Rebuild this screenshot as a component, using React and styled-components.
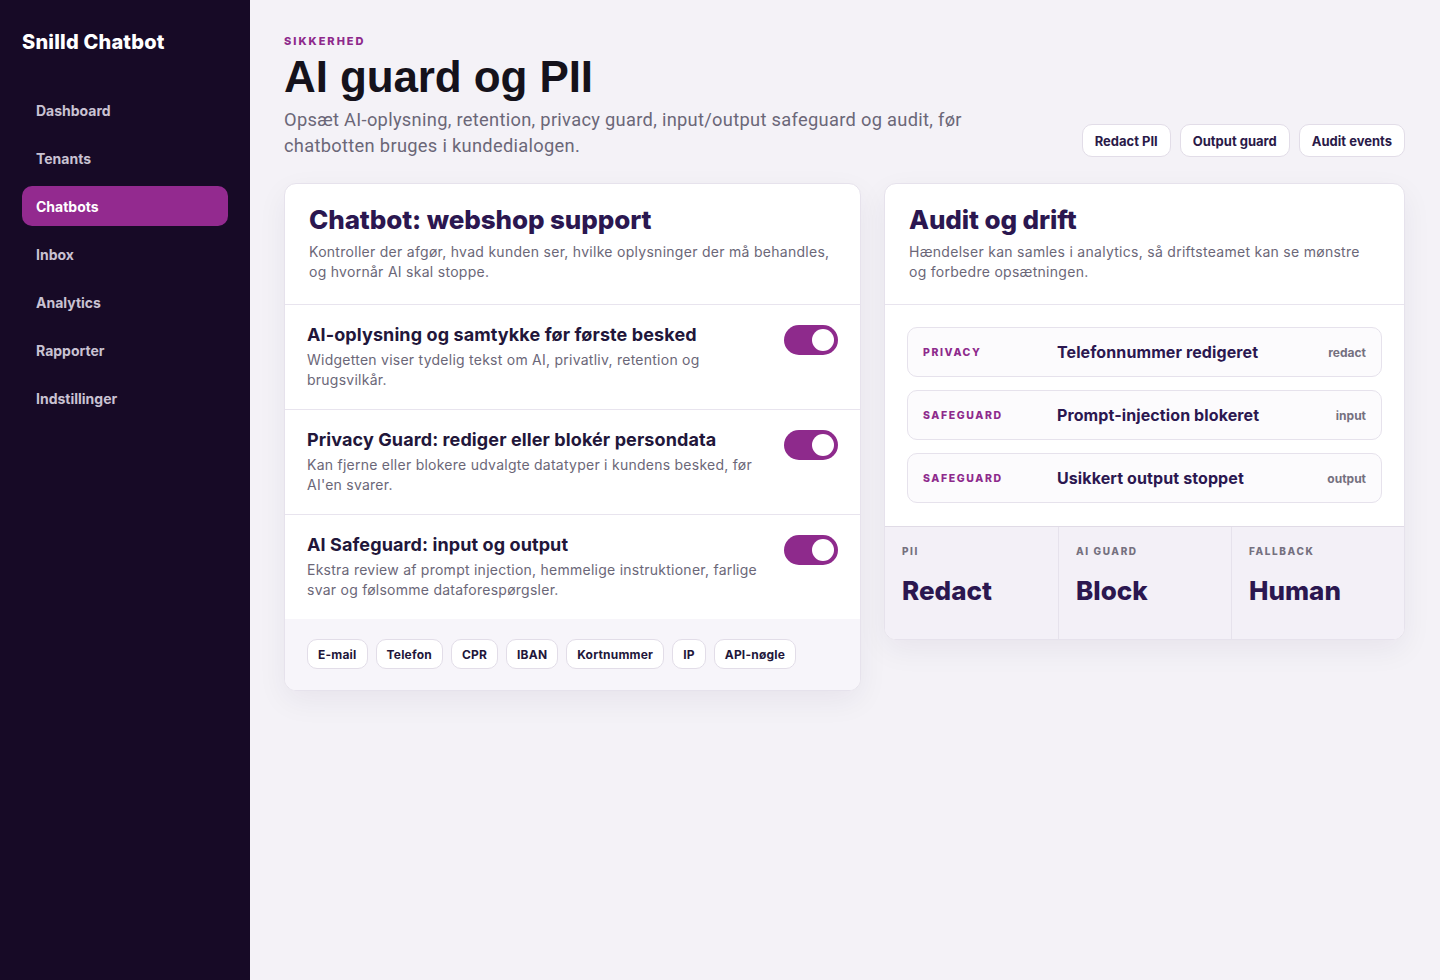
import React from "react";
import styled, { createGlobalStyle } from "styled-components";

const Global = createGlobalStyle`
  * { box-sizing: border-box; }
  html, body { margin: 0; padding: 0; }
  body { background: #f4f2f7; font-family: Inter, "Noto Sans", sans-serif; color: #22163a; }
`;

const Shell = styled.div`
  display: grid;
  grid-template-columns: 250px 1fr;
  min-height: 980px;
`;

const Sidebar = styled.aside`
  background: #170a26;
  padding: 30px 22px;
  display: flex;
  flex-direction: column;
`;

const Brand = styled.div`
  color: #fff;
  font-size: 20px;
  font-weight: 800;
  letter-spacing: 0.2px;
  margin-bottom: 36px;
`;

const Nav = styled.nav`
  display: flex;
  flex-direction: column;
  gap: 8px;
`;

const NavItem = styled.a`
  display: flex;
  align-items: center;
  height: 40px;
  padding: 0 14px;
  border-radius: 10px;
  font-size: 14px;
  font-weight: 700;
  color: ${(p) => (p.$active ? "#fff" : "#c9c2d2")};
  background: ${(p) => (p.$active ? "#932a8f" : "transparent")};
`;

const Main = styled.main`
  padding: 34px 35px 40px 34px;
`;

const Header = styled.header`
  display: flex;
  justify-content: space-between;
  align-items: flex-end;
  margin-bottom: 24px;
`;

const HeadText = styled.div`
  display: flex;
  flex-direction: column;
`;

const Eyebrow = styled.div`
  font-size: 11px;
  font-weight: 800;
  letter-spacing: 2px;
  color: #8e2a8c;
  text-transform: uppercase;
`;

const Title = styled.h1`
  margin: 4px 0 5px;
  font-family: "Liberation Sans", Roboto, sans-serif;
  font-size: 44px;
  line-height: 50px;
  font-weight: 700;
  letter-spacing: -0.1px;
  color: #15121b;
`;

const Subtitle = styled.p`
  margin: 0;
  max-width: 700px;
  font-family: Roboto, "Liberation Sans", sans-serif;
  font-size: 18.3px;
  line-height: 26px;
  letter-spacing: 0.3px;
  color: #6b6778;
`;

const Actions = styled.div`
  display: flex;
  gap: 9px;
  margin-bottom: 2px;
`;

const Pill = styled.button`
  font-family: inherit;
  height: 33px;
  padding: 0 12px;
  background: #fff;
  border: 1px solid #e2dde8;
  border-radius: 10px;
  font-size: 13px;
  font-weight: 700;
  color: #2a1a48;
`;

const Grid = styled.div`
  display: grid;
  grid-template-columns: 577px 521px;
  gap: 23px;
  align-items: start;
`;

const Card = styled.section`
  background: #fff;
  border: 1px solid #e6e2ec;
  border-radius: 12px;
  overflow: hidden;
  box-shadow: 0 10px 30px rgba(40, 20, 70, 0.06);
`;

const CardHead = styled.div`
  padding: 20px 26px 22px 24px;
  border-bottom: 1px solid #e8e4ee;
`;

const CardTitle = styled.h2`
  margin: 0 0 6px;
  font-size: 26px;
  line-height: 32px;
  font-weight: 800;
  color: #2b1750;
  letter-spacing: -0.1px;
`;

const CardDesc = styled.p`
  margin: 0;
  font-size: 14px;
  line-height: 20px;
  color: #6b6778;
  letter-spacing: 0.28px;
`;

const Row = styled.div`
  display: flex;
  justify-content: space-between;
  gap: 24px;
  padding: 18px 22px 19px;
  border-bottom: ${(p) => (p.$last ? "none" : "1px solid #e8e4ee")};
`;

const RowText = styled.div`
  display: flex;
  flex-direction: column;
  gap: 3px;
  max-width: 462px;
`;

const RowTitle = styled.div`
  font-size: 18px;
  line-height: 24px;
  font-weight: 700;
  letter-spacing: 0.1px;
  color: #22163a;
`;

const RowDesc = styled.div`
  font-size: 14px;
  line-height: 20px;
  letter-spacing: 0.25px;
  color: #6b6778;
`;

const Toggle = styled.div`
  flex: none;
  width: 54px;
  height: 30px;
  margin-top: 2px;
  border-radius: 15px;
  background: #8e2a8c;
  display: flex;
  align-items: center;
  justify-content: flex-end;
  padding: 0 4px;
`;

const Knob = styled.div`
  width: 22px;
  height: 22px;
  border-radius: 50%;
  background: #fff;
`;

const ChipBar = styled.div`
  background: #f7f5fa;
  padding: 20px 22px 21px;
  display: flex;
  gap: 8px;
  flex-wrap: wrap;
`;

const Chip = styled.span`
  height: 30px;
  display: inline-flex;
  align-items: center;
  padding: 0 10px;
  background: #fff;
  border: 1px solid #e2dde8;
  border-radius: 10px;
  font-size: 12px;
  font-weight: 700;
  letter-spacing: 0.2px;
  color: #22163a;
`;

const Events = styled.div`
  padding: 22px 22px 23px;
  display: flex;
  flex-direction: column;
  gap: 13px;
`;

const Event = styled.div`
  height: 50px;
  display: grid;
  grid-template-columns: 134px 1fr auto;
  align-items: center;
  padding: 0 15px;
  border: 1px solid #e6e2ec;
  border-radius: 10px;
  background: #fcfbfd;
`;

const EventTag = styled.span`
  font-size: 10.5px;
  font-weight: 800;
  letter-spacing: 1.6px;
  color: #8e2a8c;
`;

const EventTitle = styled.span`
  font-size: 16px;
  font-weight: 700;
  letter-spacing: 0.1px;
  color: #2b1750;
`;

const EventKind = styled.span`
  font-size: 12px;
  font-weight: 700;
  color: #75707f;
`;

const Stats = styled.div`
  display: grid;
  grid-template-columns: repeat(3, 1fr);
  border-top: 1px solid #e0dbe6;
  background: #f3f0f7;
`;

const Stat = styled.div`
  padding: 18px 17px 30px;
  height: 112px;
  border-left: ${(p) => (p.$first ? "none" : "1px solid #e6e2ec")};
  display: flex;
  flex-direction: column;
  gap: 18px;
`;

const StatLabel = styled.span`
  font-size: 10px;
  font-weight: 800;
  letter-spacing: 1.6px;
  color: #75707f;
`;

const StatValue = styled.span`
  font-size: 26px;
  font-weight: 800;
  color: #2b1750;
`;

const navItems = ["Dashboard", "Tenants", "Chatbots", "Inbox", "Analytics", "Rapporter", "Indstillinger"];

const rows = [
  {
    t: "AI-oplysning og samtykke før første besked",
    d: "Widgetten viser tydelig tekst om AI, privatliv, retention og brugsvilkår.",
  },
  {
    t: "Privacy Guard: rediger eller blokér persondata",
    d: "Kan fjerne eller blokere udvalgte datatyper i kundens besked, før AI'en svarer.",
  },
  {
    t: "AI Safeguard: input og output",
    d: "Ekstra review af prompt injection, hemmelige instruktioner, farlige svar og følsomme dataforespørgsler.",
  },
];

const chips = ["E-mail", "Telefon", "CPR", "IBAN", "Kortnummer", "IP", "API-nøgle"];

const events = [
  ["PRIVACY", "Telefonnummer redigeret", "redact"],
  ["SAFEGUARD", "Prompt-injection blokeret", "input"],
  ["SAFEGUARD", "Usikkert output stoppet", "output"],
];

const stats = [
  ["PII", "Redact"],
  ["AI GUARD", "Block"],
  ["FALLBACK", "Human"],
];

export default function App() {
  return (
    <>
      <Global />
      <Shell>
        <Sidebar>
          <Brand>Snilld Chatbot</Brand>
          <Nav>
            {navItems.map((n) => (
              <NavItem key={n} $active={n === "Chatbots"}>{n}</NavItem>
            ))}
          </Nav>
        </Sidebar>
        <Main>
          <Header>
            <HeadText>
              <Eyebrow>Sikkerhed</Eyebrow>
              <Title>AI guard og PII</Title>
              <Subtitle>
                Opsæt AI-oplysning, retention, privacy guard, input/output safeguard og audit, før chatbotten bruges i kundedialogen.
              </Subtitle>
            </HeadText>
            <Actions>
              <Pill>Redact PII</Pill>
              <Pill>Output guard</Pill>
              <Pill>Audit events</Pill>
            </Actions>
          </Header>
          <Grid>
            <Card>
              <CardHead>
                <CardTitle>Chatbot: webshop support</CardTitle>
                <CardDesc>
                  Kontroller der afgør, hvad kunden ser, hvilke oplysninger der må behandles, og hvornår AI skal stoppe.
                </CardDesc>
              </CardHead>
              {rows.map((r, i) => (
                <Row key={r.t} $last={i === rows.length - 1}>
                  <RowText>
                    <RowTitle>{r.t}</RowTitle>
                    <RowDesc>{r.d}</RowDesc>
                  </RowText>
                  <Toggle><Knob /></Toggle>
                </Row>
              ))}
              <ChipBar>
                {chips.map((c) => (
                  <Chip key={c}>{c}</Chip>
                ))}
              </ChipBar>
            </Card>
            <Card>
              <CardHead>
                <CardTitle>Audit og drift</CardTitle>
                <CardDesc>
                  Hændelser kan samles i analytics, så driftsteamet kan se mønstre og forbedre opsætningen.
                </CardDesc>
              </CardHead>
              <Events>
                {events.map(([a, b, c]) => (
                  <Event key={b}>
                    <EventTag>{a}</EventTag>
                    <EventTitle>{b}</EventTitle>
                    <EventKind>{c}</EventKind>
                  </Event>
                ))}
              </Events>
              <Stats>
                {stats.map(([l, v], i) => (
                  <Stat key={l} $first={i === 0}>
                    <StatLabel>{l}</StatLabel>
                    <StatValue>{v}</StatValue>
                  </Stat>
                ))}
              </Stats>
            </Card>
          </Grid>
        </Main>
      </Shell>
    </>
  );
}
